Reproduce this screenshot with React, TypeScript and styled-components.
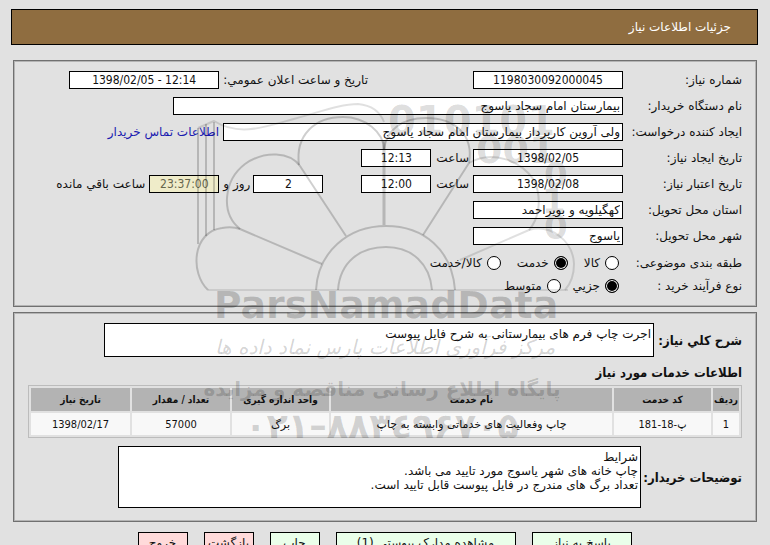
import React from "react";
import styled, { createGlobalStyle } from "styled-components";

const numeric = '"DejaVu Sans Condensed", "DejaVu Sans", sans-serif';

const Global = createGlobalStyle`
  html { scrollbar-width: none; }
  body {
    margin: 0;
    background: #e1e1e1;
    font-family: "DejaVu Sans", sans-serif;
    font-size: 12px;
    color: #111;
  }
  *, *::before, *::after { box-sizing: border-box; }
`;

const Page = styled.main`
  position: relative;
  direction: rtl;
  padding: 9px 12px 0 11px;
`;

const TitleBar = styled.header`
  display: flex;
  align-items: center;
  height: 36px;
  padding: 0 26px;
  border: 1px solid #000;
  background: #8f6d40;
  color: #fff;
`;

const Title = styled.h1`
  margin: 0;
  font-size: 12px;
  font-weight: normal;
`;

const Panel = styled.section`
  margin: 15px 1px 0 2px;
  padding: 10px 14px 7px;
  border: 1px solid #707070;
  box-shadow: inset 1px 1px 0 #b4b4b4, inset -1px -1px 0 #b4b4b4;
`;

const DetailPanel = styled(Panel)`
  margin-top: 5px;
  padding: 10px 14px 13px;
`;

const Row = styled.div`
  display: flex;
  align-items: center;
  height: 18px;
  margin-bottom: 8px;
  white-space: nowrap;
`;

const RadioRow = styled(Row)`
  height: 20px;
  margin-bottom: 3px;
`;

const Label = styled.label`
  flex: 0 0 119px;
`;

const GroupName = styled.span`
  flex: 0 0 119px;
`;

const Side = styled.label<{ $before: number; $after: number }>`
  margin-right: ${(p) => p.$before}px;
  margin-left: ${(p) => p.$after}px;
`;

const Box = styled.input<{ $w: number; $center?: boolean; $tone?: string; $before?: number }>`
  width: ${(p) => p.$w}px;
  height: 18px;
  margin: 0 ${(p) => p.$before ?? 0}px 0 0;
  padding: 0 2px;
  border: 1px solid #000;
  border-radius: 0;
  outline: 0;
  background: ${(p) => p.$tone ?? "#fff"};
  color: ${(p) => (p.$tone ? "#66664c" : "#111")};
  font-family: ${(p) => (p.$center ? numeric : "inherit")};
  font-size: 12px;
  text-align: ${(p) => (p.$center ? "center" : "right")};
`;

const ContactLink = styled.a`
  margin-right: 4px;
  color: #1a1ab0;
  text-decoration: none;
`;

const Choices = styled.div<{ $gap: number }>`
  display: flex;
  gap: ${(p) => p.$gap}px;
  padding-right: 4px;
`;

const Choice = styled.label`
  display: flex;
  align-items: center;
  gap: 5px;
`;

const Radio = styled.input`
  appearance: none;
  width: 14px;
  height: 14px;
  margin: 0;
  border: 1px solid #000;
  border-radius: 50%;
  background: #fff;
  &:checked {
    background: #000;
    box-shadow: inset 0 0 0 1px #fff;
  }
`;

const AreaRow = styled.div`
  display: flex;
  align-items: center;
`;

const AreaLabel = styled.label<{ $w: number }>`
  flex: 0 0 ${(p) => p.$w}px;
  font-family: ${numeric};
  font-size: 13px;
  font-weight: bold;
  white-space: nowrap;
`;

const Area = styled.textarea<{ $w: number; $h: number }>`
  width: ${(p) => p.$w}px;
  height: ${(p) => p.$h}px;
  padding: 3px 2px;
  border: 1px solid #000;
  border-radius: 0;
  outline: 0;
  resize: none;
  overflow: hidden;
  background: #fff;
  color: #111;
  font-family: inherit;
  font-size: 12px;
  line-height: 14px;
`;

const SectionTitle = styled.h2`
  margin: 8px 0 4px;
  font-family: ${numeric};
  font-size: 13px;
  line-height: 16px;
`;

const Table = styled.table`
  width: 100%;
  margin-bottom: 8px;
  border: 1px solid #bcbcbc;
  border-collapse: separate;
  border-spacing: 2px;
  table-layout: fixed;
`;

const Th = styled.th<{ $w?: number }>`
  width: ${(p) => (p.$w ? p.$w + "px" : "auto")};
  height: 23px;
  padding: 0;
  background: #b3b3b3;
  font-family: ${numeric};
  font-size: 10px;
  white-space: nowrap;
`;

const Td = styled.td<{ $num?: boolean }>`
  height: 22px;
  padding: 0;
  background: #f8f8f8;
  font-family: ${(p) => (p.$num ? numeric : "inherit")};
  font-size: 11px;
  text-align: center;
`;

const Actions = styled.footer`
  display: flex;
  justify-content: center;
  gap: 16px;
  margin-top: 10px;
`;

const Action = styled.button<{ $w: number; $exit?: boolean }>`
  width: ${(p) => p.$w}px;
  height: 22px;
  padding: 0;
  border: 1px solid #000;
  border-radius: 0;
  background: ${(p) => (p.$exit ? "#ffdada" : "#eaffea")};
  color: #111;
  font-family: inherit;
  font-size: 12px;
  line-height: 16px;
  white-space: nowrap;
  overflow: hidden;
`;

const Mark = styled.svg`
  position: absolute;
  top: 90px;
  left: 50%;
  margin-left: -195px;
  width: 390px;
  height: 360px;
  pointer-events: none;
  direction: ltr;
`;

const services = [
  { id: "1", code: "پ-18-181", name: "چاپ وفعالیت های خدماتی وابسته به چاپ", unit: "برگ", count: "57000", date: "1398/02/17" },
];

function Watermark() {
  return (
    <Mark viewBox="190 90 390 360" aria-hidden="true">
      <g fill="none" stroke="#000" strokeOpacity="0.19" strokeWidth="2">
        <path d="M208 290H568" strokeWidth="1" />
        <path d="M198 244V128M206 236V124M214 230V122" />
        <path d="M198 128L214 121C238 136 262 128 290 120C320 112 340 104 358 104Q378 106 384 122" strokeOpacity="0.12" />
        <path d="M208 290C190 273 192 232 222 228Q232 226 240 229L322 264" />
        <path d="M240 229C220 213 224 180 245 164C265 150 290 152 300 166L346 236" />
        <path d="M299 165C295 135 315 117 343 117C365 117 384 132 384 150" />
        <path d="M384 140V225" strokeWidth="3" />
        <path d="M384 150C386 130 402 118 426 118C454 118 474 134 469 163L423 235" />
        <path d="M469 163C492 150 520 160 534 180C543 200 538 220 529 230" strokeOpacity="0.14" />
        <path d="M460 260L529 230C550 224 573 240 574 264Q574 280 565 290" strokeOpacity="0.12" />
        <path d="M316 290C318 252 348 226 386 226S452 250 455 290" />
        <path d="M338 290C340 262 360 247 386 247S430 264 432 290" />
      </g>
      <g fill="#000" fillOpacity="0.15" fontFamily="DejaVu Sans" fontWeight="bold">
        <text x="388" y="135" fontSize="40">010101</text>
        <text x="476" y="163" fontSize="38">001</text>
        <text x="544" y="187" fontSize="34">0</text>
        <text x="542" y="213" fontSize="34">1</text>
        <text x="544" y="239" fontSize="34">0</text>
      </g>
      <text x="386" y="318" textAnchor="middle" fill="#000" fillOpacity="0.19" fontFamily="DejaVu Sans" fontWeight="bold" fontSize="38">ParsNamadData</text>
      <g fill="#000" fillOpacity="0.18" textAnchor="middle" direction="rtl" fontFamily="DejaVu Sans">
        <text x="385" y="354" fontSize="20" fontStyle="italic">مرکز فرآوری اطلاعات پارس نماد داده ها</text>
        <text x="382" y="396" fontSize="20" fontWeight="bold">پایگاه اطلاع رسانی مناقصه و مزایده</text>
      </g>
      <text x="382" y="438" textAnchor="middle" fill="#000" fillOpacity="0.17" fontFamily="DejaVu Sans" fontWeight="bold" fontSize="35">۰۲۱–۸۸۳٤۹۶۷۰۵</text>
    </Mark>
  );
}

export default function App() {
  return (
    <>
      <Global />
      <Page lang="fa">
        <TitleBar><Title>جزئیات اطلاعات نیاز</Title></TitleBar>

        <Panel>
          <Row>
            <Label htmlFor="number">شماره نیاز:</Label>
            <Box id="number" $w={150} $center readOnly value="1198030092000045" />
            <Side htmlFor="announce" $before={105} $after={4}>تاریخ و ساعت اعلان عمومي:</Side>
            <Box id="announce" dir="ltr" $w={150} $center readOnly value="1398/02/05 - 12:14" />
          </Row>
          <Row>
            <Label htmlFor="org">نام دستگاه خریدار:</Label>
            <Box id="org" $w={450} readOnly value="بیمارستان امام سجاد یاسوج" />
          </Row>
          <Row>
            <Label htmlFor="creator">ایجاد کننده درخواست:</Label>
            <Box id="creator" $w={400} readOnly value="ولی آروین کارپرداز بیمارستان امام سجاد یاسوج" />
            <ContactLink href="#contact">اطلاعات تماس خریدار</ContactLink>
          </Row>
          <Row>
            <Label htmlFor="created">تاریخ ایجاد نیاز:</Label>
            <Box id="created" dir="ltr" $w={150} $center readOnly value="1398/02/05" />
            <Side htmlFor="createdTime" $before={4} $after={5}>ساعت</Side>
            <Box id="createdTime" dir="ltr" $w={70} $center readOnly value="12:13" />
          </Row>
          <Row>
            <Label htmlFor="expires">تاریخ اعتبار نیاز:</Label>
            <Box id="expires" dir="ltr" $w={150} $center readOnly value="1398/02/08" />
            <Side htmlFor="expiresTime" $before={4} $after={5}>ساعت</Side>
            <Box id="expiresTime" dir="ltr" $w={70} $center readOnly value="12:00" />
            <Box id="days" $w={70} $center $before={38} readOnly value="2" />
            <Side htmlFor="days" $before={3} $after={4}>روز و</Side>
            <Box id="remaining" dir="ltr" $w={70} $center $tone="#efecc9" readOnly value="23:37:00" />
            <Side htmlFor="remaining" $before={4} $after={0}>ساعت باقي مانده</Side>
          </Row>
          <Row>
            <Label htmlFor="province">استان محل تحویل:</Label>
            <Box id="province" $w={150} readOnly value="کهگیلویه و بویراحمد" />
          </Row>
          <Row>
            <Label htmlFor="city">شهر محل تحویل:</Label>
            <Box id="city" $w={150} readOnly value="یاسوج" />
          </Row>
          <RadioRow role="radiogroup" aria-labelledby="kind">
            <GroupName id="kind">طبقه بندی موضوعی:</GroupName>
            <Choices $gap={16}>
              <Choice><Radio type="radio" name="kind" />کالا</Choice>
              <Choice><Radio type="radio" name="kind" defaultChecked />خدمت</Choice>
              <Choice><Radio type="radio" name="kind" />کالا/خدمت</Choice>
            </Choices>
          </RadioRow>
          <RadioRow role="radiogroup" aria-labelledby="process">
            <GroupName id="process">نوع فرآیند خرید :</GroupName>
            <Choices $gap={12}>
              <Choice><Radio type="radio" name="process" defaultChecked />جزیي</Choice>
              <Choice><Radio type="radio" name="process" />متوسط</Choice>
            </Choices>
          </RadioRow>
        </Panel>

        <DetailPanel>
          <AreaRow>
            <AreaLabel htmlFor="summary" $w={88}>شرح کلي نیاز:</AreaLabel>
            <Area id="summary" $w={550} $h={34} readOnly value="اجرت چاپ فرم های بیمارستانی به شرح فایل پیوست" />
          </AreaRow>
          <SectionTitle>اطلاعات خدمات مورد نیاز</SectionTitle>
          <Table>
            <thead>
              <tr>
                <Th $w={26}>ردیف</Th>
                <Th $w={97}>کد خدمت</Th>
                <Th>نام خدمت</Th>
                <Th $w={97}>واحد اندازه گیری</Th>
                <Th $w={98}>تعداد / مقدار</Th>
                <Th $w={99}>تاریخ نیاز</Th>
              </tr>
            </thead>
            <tbody>
              {services.map((s) => (
                <tr key={s.id}>
                  <Td $num>{s.id}</Td>
                  <Td $num>{s.code}</Td>
                  <Td>{s.name}</Td>
                  <Td>{s.unit}</Td>
                  <Td $num>{s.count}</Td>
                  <Td $num>{s.date}</Td>
                </tr>
              ))}
            </tbody>
          </Table>
          <AreaRow>
            <AreaLabel htmlFor="notes" $w={101}>توضیحات خریدار:</AreaLabel>
            <Area id="notes" $w={523} $h={62} readOnly value={"شرایط\nچاپ خانه های شهر یاسوج مورد تایید می باشد.\nتعداد برگ های مندرج در فایل پیوست قابل تایید است."} />
          </AreaRow>
        </DetailPanel>

        <Actions>
          <Action type="button" $w={100}>پاسخ به نیاز</Action>
          <Action type="button" $w={180}>مشاهده مدارک پیوستی (1)</Action>
          <Action type="button" $w={50}>چاپ</Action>
          <Action type="button" $w={50} $exit>بازگشت</Action>
          <Action type="button" $w={50} $exit>خروج</Action>
        </Actions>
        <Watermark />
      </Page>
    </>
  );
}
